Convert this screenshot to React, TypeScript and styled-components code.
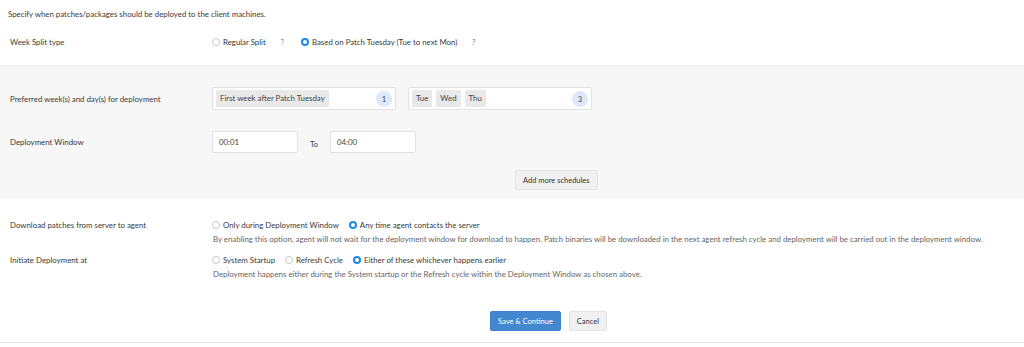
import React from "react";
import styled, { createGlobalStyle } from "styled-components";

const GlobalStyle = createGlobalStyle`
  html, body {
    margin: 0;
    padding: 0;
    background: #ffffff;
  }
  body {
    font-family: Lato, "Open Sans", sans-serif;
    font-size: 7.85px;
    color: #3a3a3a;
  }
`;

const Page = styled.div`
  width: 1024px;
  height: 347px;
  display: flex;
  flex-direction: column;
  overflow: hidden;
`;

const Intro = styled.p`
  margin: 0;
  padding: 9px 8px 0;
  height: 19px;
  line-height: 10px;
`;

const Row = styled.div<{ $h?: number; $top?: number }>`
  display: flex;
  align-items: ${(p) => (p.$h ? "center" : "flex-start")};
  min-height: ${(p) => (p.$h ? `${p.$h}px` : "auto")};
  margin-top: ${(p) => p.$top ?? 0}px;
`;

const Label = styled.div<{ $pt?: number }>`
  width: 212px;
  padding-left: 10px;
  box-sizing: border-box;
  flex-shrink: 0;
  padding-top: ${(p) => p.$pt ?? 0}px;
  line-height: 10px;
`;

const Field = styled.div`
  display: flex;
  flex-direction: column;
  gap: 4px;
`;

const Options = styled.div`
  display: flex;
  align-items: center;
  height: 10px;
`;

const RadioOption = styled.label`
  display: flex;
  align-items: center;
  gap: 3px;
  margin-right: 10px;
  white-space: nowrap;
`;

const RadioDot = styled.span<{ $on?: boolean }>`
  width: 8px;
  height: 8px;
  border-radius: 50%;
  box-sizing: border-box;
  border: ${(p) => (p.$on ? "2.5px solid #1b8ae4" : "1px solid #c9c9c9")};
  background: #ffffff;
  flex-shrink: 0;
`;

const Help = styled.span`
  color: #777;
  font-size: 7px;
  margin-right: 17px;
  margin-left: 5px;
`;

const Hint = styled.div`
  color: #666;
  line-height: 10px;
  padding-left: 1px;
  white-space: nowrap;
`;

const Panel = styled.section`
  margin-top: 12px;
  background: #f7f7f7;
  border-top: 1px solid #f0f0f0;
  padding: 21px 0 9px;
  height: 134px;
  box-sizing: border-box;
`;

const MultiBox = styled.div`
  width: 184px;
  height: 23px;
  box-sizing: border-box;
  background: #fff;
  border: 1px solid #e2e2e2;
  border-radius: 2px;
  display: flex;
  align-items: center;
  padding: 0 3px;
  gap: 4px;
  margin-right: 12px;
`;

const Tag = styled.span`
  background: #e9e9e9;
  border-radius: 1px;
  padding: 0 4px;
  height: 17px;
  line-height: 17px;
  color: #444;
`;

const Count = styled.span`
  margin-left: auto;
  width: 16px;
  height: 16px;
  border-radius: 50%;
  background: #dde9f8;
  color: #444;
  font-size: 7px;
  display: flex;
  align-items: center;
  justify-content: center;
`;

const TimeInput = styled.div`
  width: 86px;
  height: 22px;
  box-sizing: border-box;
  background: #fff;
  border: 1px solid #e2e2e2;
  border-radius: 2px;
  padding: 0 6px;
  display: flex;
  align-items: center;
  color: #444;
`;

const To = styled.span`
  width: 32px;
  text-align: center;
  padding-top: 4px;
  color: #444;
`;

const Button = styled.button<{ $primary?: boolean }>`
  font-family: Lato, "Open Sans", sans-serif;
  font-size: 7.5px;
  height: 20px;
  padding: 0 7px;
  border-radius: 2px;
  cursor: pointer;
  border: 1px solid ${(p) => (p.$primary ? "#3b80c8" : "#e4e4e4")};
  background: ${(p) => (p.$primary ? "#4287cf" : "#f1f1f1")};
  color: ${(p) => (p.$primary ? "#ffffff" : "#333333")};
`;

const ScheduleActions = styled.div`
  display: flex;
  padding-left: 515px;
  margin-top: 17px;
`;

const Footer = styled.div`
  display: flex;
  gap: 8px;
  padding-left: 490px;
  margin-top: 32px;
  padding-bottom: 11px;
  border-bottom: 1px solid #e8e8e8;
`;

const Radio = ({ on, children }: { on?: boolean; children: React.ReactNode }) => (
  <RadioOption>
    <RadioDot $on={on} />
    {children}
  </RadioOption>
);

const App = () => {
  return (
    <Page>
      <GlobalStyle />
      <Intro>Specify when patches/packages should be deployed to the client machines.</Intro>

      <Row $h={22} $top={3}>
        <Label>Week Split type</Label>
        <Options>
          <Radio>Regular Split</Radio>
          <Help>?</Help>
          <Radio on>Based on Patch Tuesday (Tue to next Mon)</Radio>
          <Help>?</Help>
        </Options>
      </Row>

      <Panel>
        <Row $h={23}>
          <Label>Preferred week(s) and day(s) for deployment</Label>
          <MultiBox>
            <Tag>First week after Patch Tuesday</Tag>
            <Count>1</Count>
          </MultiBox>
          <MultiBox>
            <Tag>Tue</Tag>
            <Tag>Wed</Tag>
            <Tag>Thu</Tag>
            <Count>3</Count>
          </MultiBox>
        </Row>

        <Row $h={22} $top={21}>
          <Label>Deployment Window</Label>
          <TimeInput>00:01</TimeInput>
          <To>To</To>
          <TimeInput>04:00</TimeInput>
        </Row>

        <ScheduleActions>
          <Button>Add more schedules</Button>
        </ScheduleActions>
      </Panel>

      <Row $top={21}>
        <Label>Download patches from server to agent</Label>
        <Field>
          <Options>
            <Radio>Only during Deployment Window</Radio>
            <Radio on>Any time agent contacts the server</Radio>
          </Options>
          <Hint>
            By enabling this option, agent will not wait for the deployment window for download to happen. Patch
            binaries will be downloaded in the next agent refresh cycle and deployment will be carried out in the
            deployment window.
          </Hint>
        </Field>
      </Row>

      <Row $top={11}>
        <Label>Initiate Deployment at</Label>
        <Field>
          <Options>
            <Radio>System Startup</Radio>
            <Radio>Refresh Cycle</Radio>
            <Radio on>Either of these whichever happens earlier</Radio>
          </Options>
          <Hint>
            Deployment happens either during the System startup or the Refresh cycle within the Deployment Window as
            chosen above.
          </Hint>
        </Field>
      </Row>

      <Footer>
        <Button $primary>Save &amp; Continue</Button>
        <Button>Cancel</Button>
      </Footer>
    </Page>
  );
};

export default App;
